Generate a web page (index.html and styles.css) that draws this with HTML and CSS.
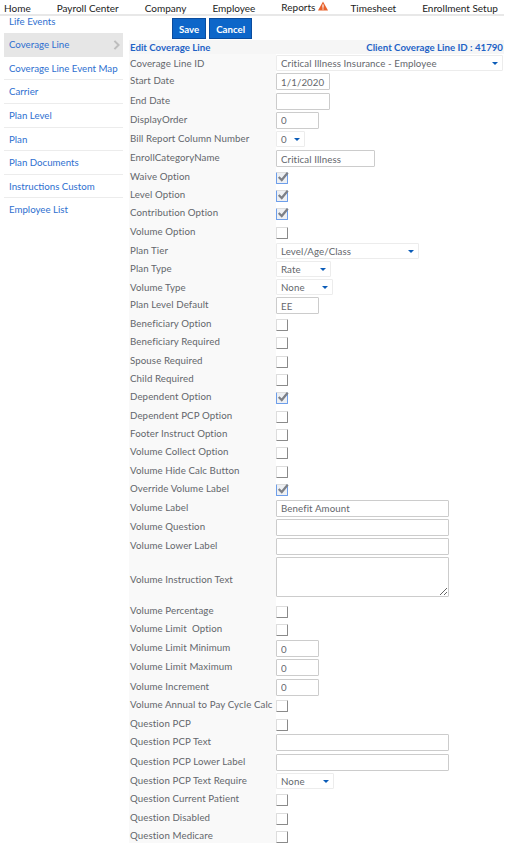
FILE: index.html

```html
<!DOCTYPE html>
<html lang="en">
<head>
    <meta charset="UTF-8">
    <meta name="viewport" content="width=device-width, initial-scale=1.0">
    <title>Edit Coverage Line</title>
    <link rel="stylesheet" href="styles.css">
</head>
<body>
    <nav class="topnav">
        <a>Home</a>
        <a>Payroll Center</a>
        <a>Company</a>
        <a>Employee</a>
        <a class="has-alert">Reports
            <svg class="alert-icon" viewBox="0 0 12 11" width="10" height="10"><path d="M6 0 L12 11 H0 Z" fill="#e8622c"/><rect x="5.3" y="3.6" width="1.4" height="4" fill="#fff"/><rect x="5.3" y="8.4" width="1.4" height="1.4" fill="#fff"/></svg>
        </a>
        <a>Timesheet</a>
        <a>Enrollment Setup</a>
    </nav>

    <div class="page">
        <ul class="sidenav">
            <li>Life Events</li>
            <li class="active">Coverage Line
                <svg class="chevron" viewBox="0 0 8 12" width="7" height="10"><path d="M1.5 1 L6.5 6 L1.5 11" fill="none" stroke="#bdbdbd" stroke-width="2.4"/></svg>
            </li>
            <li>Coverage Line Event Map</li>
            <li>Carrier</li>
            <li>Plan Level</li>
            <li>Plan</li>
            <li>Plan Documents</li>
            <li>Instructions Custom</li>
            <li>Employee List</li>
        </ul>

        <main class="content">
            <div class="action-btns">
                <button class="btn">Save</button>
                <button class="btn">Cancel</button>
            </div>

            <div class="panel-head">
                <span>Edit Coverage Line</span>
                <span>Client Coverage Line ID : 41790</span>
            </div>

            <div class="row sel-row"><label>Coverage Line ID</label><div class="dd w-227">Critical Illness Insurance - Employee<i></i></div></div>
            <div class="row"><label>Start Date</label><input class="w-54" value="1/1/2020"></div>
            <div class="row"><label>End Date</label><input class="w-54"></div>
            <div class="row"><label>DisplayOrder</label><input class="w-43" value="0"></div>
            <div class="row"><label>Bill Report Column Number</label><div class="dd w-29">0<i></i></div></div>
            <div class="row"><label>EnrollCategoryName</label><input class="w-99" value="Critical Illness"></div>
            <div class="row chk-row"><label>Waive Option</label><span class="chk on"><svg viewBox="0 0 14 13"><path d="M2 6.5 L5.5 10 L12.5 1.5" fill="none" stroke="#7d8087" stroke-width="2.6"/></svg></span></div>
            <div class="row chk-row"><label>Level Option</label><span class="chk on"><svg viewBox="0 0 14 13"><path d="M2 6.5 L5.5 10 L12.5 1.5" fill="none" stroke="#7d8087" stroke-width="2.6"/></svg></span></div>
            <div class="row chk-row"><label>Contribution Option</label><span class="chk on"><svg viewBox="0 0 14 13"><path d="M2 6.5 L5.5 10 L12.5 1.5" fill="none" stroke="#7d8087" stroke-width="2.6"/></svg></span></div>
            <div class="row chk-row"><label>Volume Option</label><span class="chk"></span></div>
            <div class="row sel-row"><label>Plan Tier</label><div class="dd w-143">Level/Age/Class<i></i></div></div>
            <div class="row sel-row"><label>Plan Type</label><div class="dd w-55">Rate<i></i></div></div>
            <div class="row sel-row"><label>Volume Type</label><div class="dd w-57">None<i></i></div></div>
            <div class="row"><label>Plan Level Default</label><input class="w-43" value="EE"></div>
            <div class="row chk-row"><label>Beneficiary Option</label><span class="chk"></span></div>
            <div class="row chk-row"><label>Beneficiary Required</label><span class="chk"></span></div>
            <div class="row chk-row"><label>Spouse Required</label><span class="chk"></span></div>
            <div class="row chk-row"><label>Child Required</label><span class="chk"></span></div>
            <div class="row chk-row"><label>Dependent Option</label><span class="chk on"><svg viewBox="0 0 14 13"><path d="M2 6.5 L5.5 10 L12.5 1.5" fill="none" stroke="#7d8087" stroke-width="2.6"/></svg></span></div>
            <div class="row chk-row"><label>Dependent PCP Option</label><span class="chk"></span></div>
            <div class="row chk-row"><label>Footer Instruct Option</label><span class="chk"></span></div>
            <div class="row chk-row"><label>Volume Collect Option</label><span class="chk"></span></div>
            <div class="row chk-row"><label>Volume Hide Calc Button</label><span class="chk"></span></div>
            <div class="row chk-row"><label>Override Volume Label</label><span class="chk on"><svg viewBox="0 0 14 13"><path d="M2 6.5 L5.5 10 L12.5 1.5" fill="none" stroke="#7d8087" stroke-width="2.6"/></svg></span></div>
            <div class="row"><label>Volume Label</label><input class="w-173" value="Benefit Amount"></div>
            <div class="row"><label>Volume Question</label><input class="w-173"></div>
            <div class="row"><label>Volume Lower Label</label><input class="w-173"></div>
            <div class="row area-row"><label>Volume Instruction Text</label><textarea class="w-173"></textarea></div>
            <div class="row chk-row"><label>Volume Percentage</label><span class="chk"></span></div>
            <div class="row chk-row"><label>Volume Limit &nbsp;Option</label><span class="chk"></span></div>
            <div class="row"><label>Volume Limit Minimum</label><input class="w-43" value="0"></div>
            <div class="row"><label>Volume Limit Maximum</label><input class="w-43" value="0"></div>
            <div class="row"><label>Volume Increment</label><input class="w-43" value="0"></div>
            <div class="row chk-row"><label>Volume Annual to Pay Cycle Calc</label><span class="chk"></span></div>
            <div class="row chk-row"><label>Question PCP</label><span class="chk"></span></div>
            <div class="row"><label>Question PCP Text</label><input class="w-173"></div>
            <div class="row"><label>Question PCP Lower Label</label><input class="w-173"></div>
            <div class="row"><label>Question PCP Text Require</label><div class="dd w-58">None<i></i></div></div>
            <div class="row chk-row"><label>Question Current Patient</label><span class="chk"></span></div>
            <div class="row chk-row"><label>Question Disabled</label><span class="chk"></span></div>
            <div class="row chk-row"><label>Question Medicare</label><span class="chk"></span></div>
        </main>
    </div>
</body>
</html>
```

FILE: styles.css

```css
html, body {
    height: 100%;
    overflow: hidden;
}

body {
    margin: 0;
    font-family: Lato, "Open Sans", sans-serif;
    font-size: 9.7px;
    color: #63666b;
    background: #fff;
}

/* top menu */
.topnav {
    display: flex;
    gap: 26px;
    width: 500px;
    height: 14px;
    padding-left: 4px;
    border-bottom: 2px solid #e8e8e8;
    color: #1c1c1c;
    font-size: 10px;
    line-height: 16px;
    white-space: nowrap;
}

.has-alert {
    display: flex;
    align-items: center;
    gap: 3px;
    margin-right: -4px;
}

.alert-icon {
    margin-top: -2px;
}

.page {
    display: flex;
    width: 500px;
    margin-left: 4px;
}

/* left menu */
.sidenav {
    flex: none;
    width: 119px;
    margin: 0 6px 0 0;
    padding: 0;
    list-style: none;
    color: #2e6fd0;
}

.sidenav li {
    position: relative;
    box-sizing: border-box;
    height: 23.65px;
    padding-left: 5px;
    line-height: 22px;
    white-space: nowrap;
    border-bottom: 1.5px solid #ececec;
}

.sidenav li:first-child {
    height: 17px;
    line-height: 10px;
    border-bottom: none;
}

.sidenav li:last-child {
    border-bottom: none;
}

.sidenav li.active {
    background: #e6e6e6;
    border-bottom: none;
    line-height: 23px;
}

.chevron {
    position: absolute;
    right: 3px;
    top: 7px;
}

/* form */
.content {
    flex: 1;
    min-width: 0;
}

.action-btns {
    display: flex;
    gap: 3px;
    height: 22px;
    padding: 2px 0 0 43px;
}

.btn {
    height: 21px;
    padding: 0 6px;
    border: 1px solid #0a4c9e;
    background: #0d66c9;
    color: #fff;
    font: 700 9.7px Lato, sans-serif;
}

.panel-head {
    display: flex;
    justify-content: space-between;
    height: 14px;
    padding: 0 1px;
    line-height: 14px;
    background: #f6f6f6;
    color: #1f63c6;
    font-weight: 700;
}

.row {
    display: flex;
    align-items: center;
    height: 19.2px;
}

.chk-row,
.sel-row {
    height: 18.3px;
}

.area-row {
    height: 46.5px;
    align-items: flex-start;
}

.row label {
    flex: none;
    align-self: stretch;
    display: flex;
    align-items: center;
    box-sizing: border-box;
    width: 147px;
    padding: 0 0 3px 1px;
    background: #f9f9f9;
    white-space: nowrap;
    letter-spacing: 0.1px;
}

.sel-row label {
    padding-bottom: 1px;
}

.area-row label {
    padding-bottom: 0;
}

.row input,
.row textarea,
.dd {
    box-sizing: border-box;
    margin: 0;
    padding: 0 4px;
    border: 1px solid #ccc;
    border-radius: 1px;
    font: 9.7px Lato, sans-serif;
    letter-spacing: 0.1px;
    color: #63666b;
    background: #fff;
    outline: none;
}

.row input {
    height: 17px;
}

.row textarea {
    height: 40px;
    margin-top: 1px;
}

.dd {
    position: relative;
    height: 16px;
    line-height: 14px;
    border-color: #ececec;
}

.dd i {
    position: absolute;
    right: 4px;
    top: 6px;
    width: 0;
    height: 0;
    border: 3px solid transparent;
    border-top: 3px solid #0b5cb8;
}

.chk {
    position: relative;
    display: block;
    box-sizing: border-box;
    width: 12px;
    height: 12px;
    margin-top: 1px;
    border: 1px solid #ddd;
    border-right-color: #8a8a8a;
    border-bottom-color: #8a8a8a;
    border-radius: 1px;
    background: #fff;
}

.chk.on {
    border-color: #ddd #6d9eea #6d9eea #6d9eea;
    background: #eef0f3;
}

.chk svg {
    position: absolute;
    left: 0;
    top: -2px;
    width: 12px;
    height: 12px;
}

.w-29 { width: 29px; }
.w-43 { width: 43px; }
.w-54 { width: 54px; }
.w-55 { width: 55px; }
.w-57 { width: 57px; }
.w-58 { width: 58px; }
.w-99 { width: 99px; }
.w-143 { width: 143px; }
.w-173 { width: 173px; }
.w-227 { width: 227px; }
```
